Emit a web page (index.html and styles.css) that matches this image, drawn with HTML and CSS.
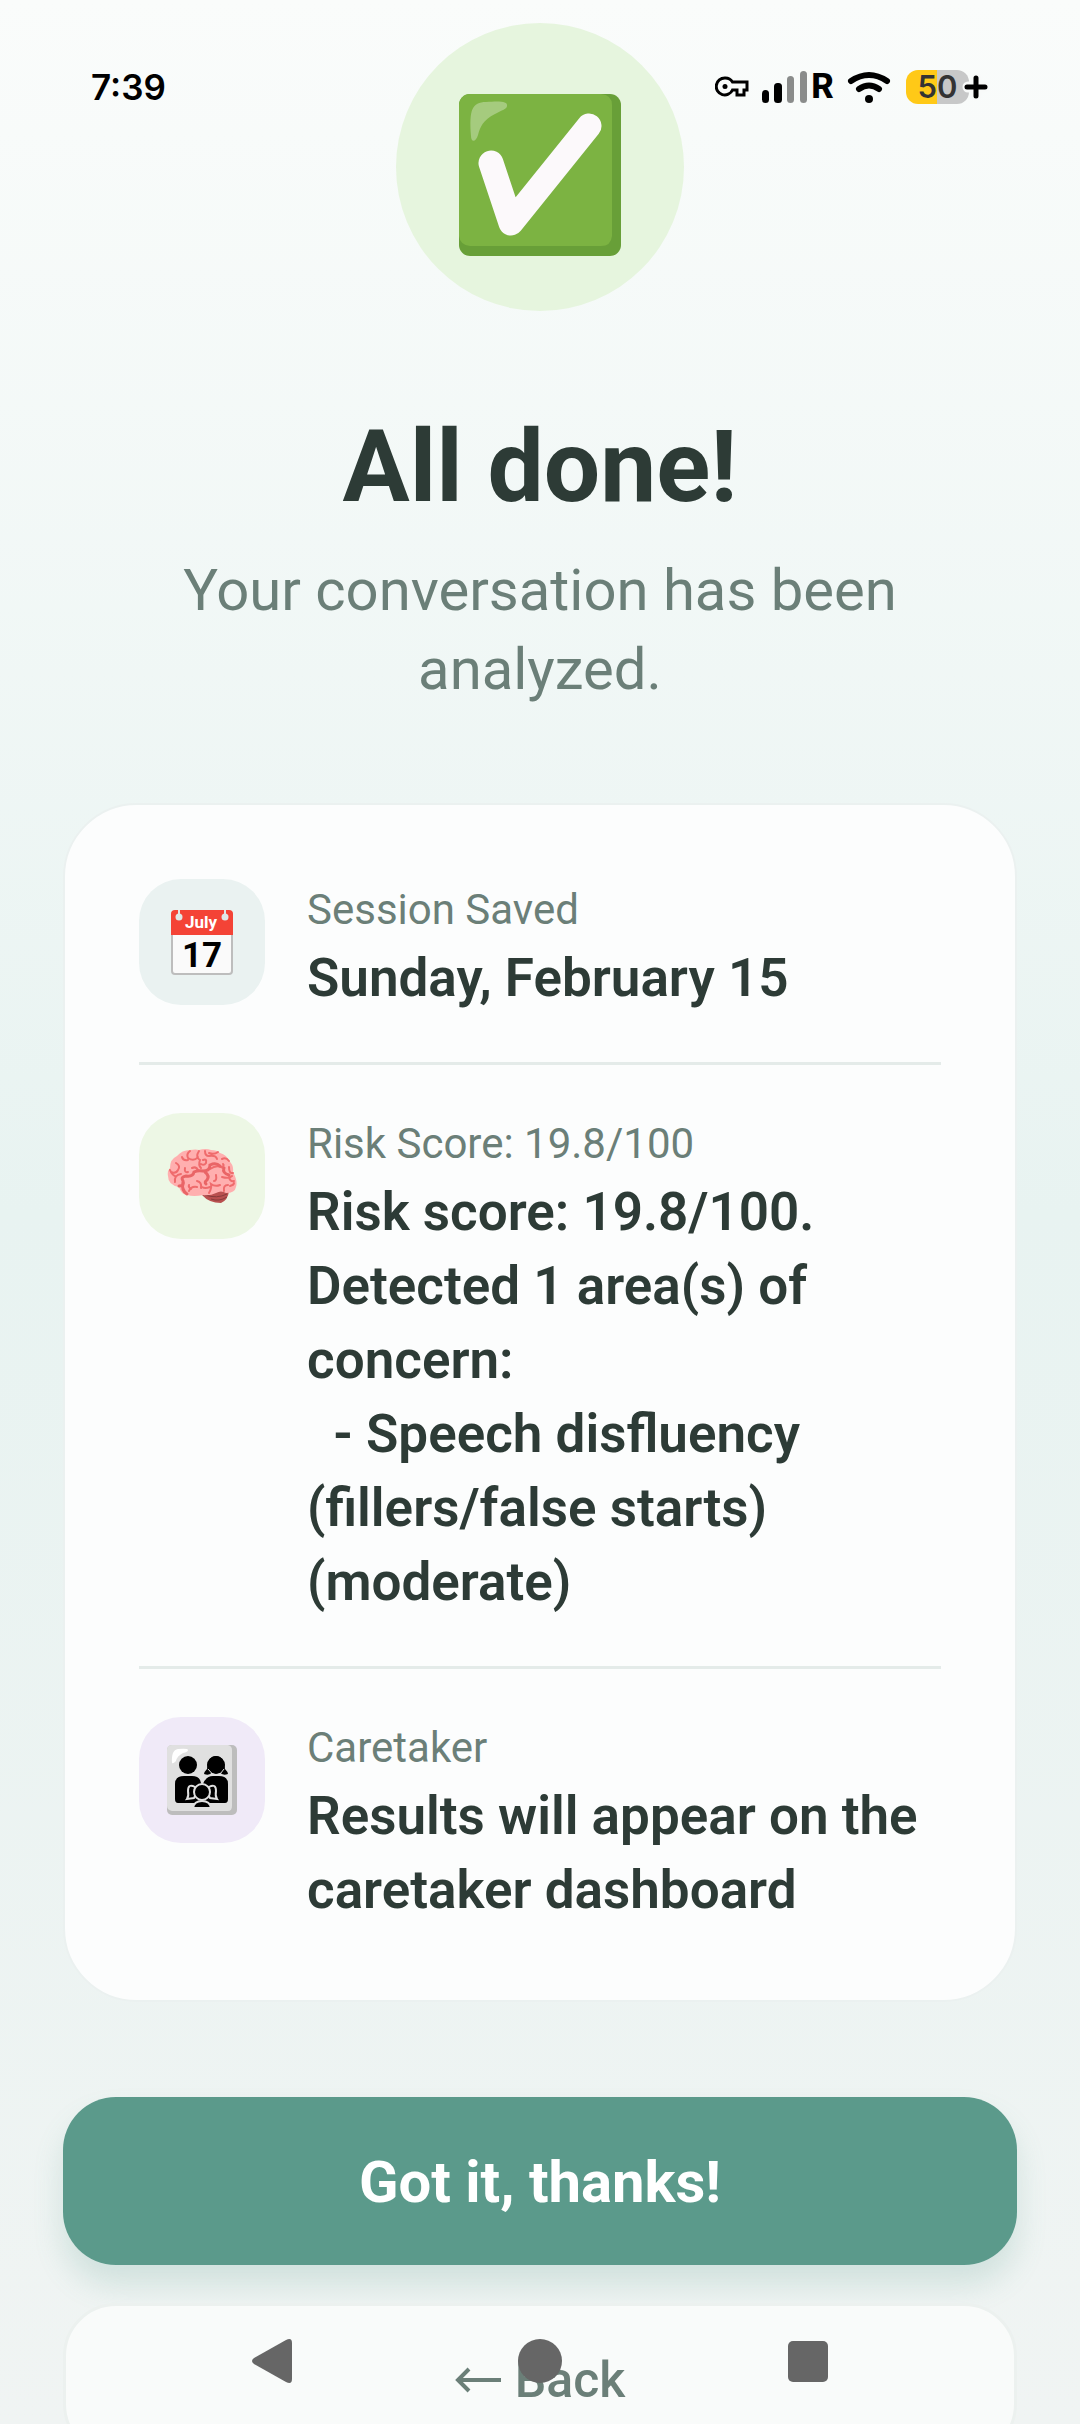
FILE: index.html
```
<!DOCTYPE html>
<html lang="en">
<head>
    <meta charset="UTF-8">
    <meta name="viewport" content="width=device-width, initial-scale=1.0">
    <title>All done!</title>
    <link rel="stylesheet" href="styles.css">
</head>
<body>
    <div class="screen">
        <div class="status-bar">
            <span class="time">7:39</span>
            <div class="status-icons">
                <svg class="key-icon" width="34" height="22" viewBox="0 0 34 22">
                    <path d="M10 2a8.500 8.500 0 1 0 7.500 12H22v5h7v-5h3V6H17.500A8.500 8.500 0 0 0 10 2z" fill="none" stroke="#000" stroke-width="3"/>
                    <circle cx="10" cy="10.500" r="2.500"/>
                </svg>
                <svg class="signal-icon" width="46" height="34" viewBox="0 0 46 34">
                    <rect x="0" y="20" width="7" height="13" rx="3.500"/>
                    <rect x="12" y="13" width="8" height="20" rx="3.500"/>
                    <rect x="25" y="6" width="7" height="27" rx="3.500" fill="#8a8c8b"/>
                    <rect x="38" y="1" width="7" height="32" rx="3.500" fill="#8a8c8b"/>
                </svg>
                <span class="roaming">R</span>
                <svg class="wifi-icon" width="44" height="34" viewBox="0 0 44 34" fill="none" stroke="#000" stroke-width="6" stroke-linecap="round">
                    <path d="M4 11Q22-1 40 11"/>
                    <path d="M12 19Q22 12 32 19"/>
                    <circle cx="22" cy="29" r="4" fill="#000" stroke="none"/>
                </svg>
                <div class="battery">
                    <span class="battery-level">50</span>
                    <svg class="plus-icon" width="28" height="28" viewBox="0 0 28 28" fill="none" stroke-linecap="round">
                        <path d="M14 6v16M6 14h16" stroke="#f8faf9" stroke-width="11"/>
                        <path d="M14 5v18M5 14h18" stroke="#000" stroke-width="5"/>
                    </svg>
                </div>
            </div>
        </div>

        <main class="content">
            <div class="hero">
                <svg width="162" height="162" viewBox="0 0 162 162">
                    <rect width="162" height="162" rx="11" fill="#689f38"/>
                    <path d="M0 11A11 11 0 0 1 11 0H142Q153 1 153 11V142Q152 152 142 152H11Q1 151 0 142z" fill="#7cb342"/>
                    <path d="M12 42C10 16 13 8 27 8C40 7 49 7 48 12C48 15 43 16 36 20C24 26 21 33 19 41C17 48 12 49 12 42z" fill="#a5cb7e"/>
                    <path d="M32 69L52 129L130 32" fill="none" stroke="#fcf9fb" stroke-width="25" stroke-linecap="round" stroke-linejoin="round"/>
                </svg>
            </div>
            <h1>All done!</h1>
            <p class="subtitle">Your conversation has been analyzed.</p>

            <section class="card">
                <div class="row">
                    <div class="icon icon-calendar">
                        <svg width="64" height="66" viewBox="0 0 64 66">
                            <rect x="2" y="3" width="60" height="62" rx="3" fill="#fafafa" stroke="#bdbdbd" stroke-width="2"/>
                            <path d="M1 26V5Q1 1 5 1H59Q63 1 63 5V26z" fill="#f44336"/>
                            <path d="M9 1v6M55 1v6" stroke="#e0e8e7" stroke-width="2"/>
                            <circle cx="9" cy="8" r="3.500" fill="#e0e8e7"/>
                            <circle cx="55" cy="8" r="3.500" fill="#e0e8e7"/>
                            <text class="calendar-month" x="31" y="19" text-anchor="middle">July</text>
                            <text class="calendar-day" x="32" y="58" text-anchor="middle">17</text>
                        </svg>
                    </div>
                    <div class="info">
                        <p class="label">Session Saved</p>
                        <p class="value">Sunday, February 15</p>
                    </div>
                </div>
                <div class="row">
                    <div class="icon icon-brain">
                        <svg width="70" height="56" viewBox="0 0 70 56">
                            <path d="M35 47Q42 55 54 55Q61 52 62 43L50 40z" fill="#b9504f"/>
                            <path d="M38 47Q50 51 60 46M44 51Q52 54 60 49" fill="none" stroke="#873b3b" stroke-width="1"/>
                            <path d="M12 39Q1 37 1 28Q0 23 3 20Q3 11 10 8Q15 2 23 2Q29 1 32 2Q39 0 44 2Q50 2 53 5Q60 7 62 13Q67 17 66 24Q71 33 69 39Q68 45 59 45Q54 42 49 45Q43 48 36 47Q27 49 20 47Q14 46 12 39z" fill="#ffafaf"/>
                            <g fill="none" stroke="#ef6b6c" stroke-width="2" stroke-linecap="round">
                                <path d="M23 3Q19 6 21 10Q27 14 31 9M15 9Q16 13 21 12M9 15Q14 18 11 22Q9 26 4 24M3 22Q5 27 8 28M8 34Q7 27 14 26M18 20Q17 25 21 24M25 20Q29 18 31 22M32 3Q28 9 33 12Q31 17 34 20M38 3Q38 8 42 8Q49 7 50 11M42 5Q47 7 51 4M36 12Q40 10 39 15Q37 18 34 16M55 11Q59 9 62 13M56 16Q58 18 54 19M43 21Q50 16 56 20M62 19Q62 26 66 25M55 29Q62 31 65 28M62 29Q63 34 67 33M22 43Q24 38 30 39M24 41Q21 39 22 37M34 40Q35 34 30 33M35 39Q38 41 43 39M42 45Q45 40 44 36Q48 39 53 37M57 43Q56 37 61 37M63 38Q67 37 67 35M49 27Q50 33 47 33"/>
                                <path d="M12 38Q18 38 16 33Q13 29 19 28Q26 29 27 24Q31 22 36 23Q43 23 43 17Q49 14 53 18M16 34Q14 42 20 46M38 24Q43 28 40 32Q37 34 39 36M57 20Q55 25 62 27" stroke="#e96566" stroke-width="3"/>
                            </g>
                        </svg>
                    </div>
                    <div class="info">
                        <p class="label">Risk Score: 19.8/100</p>
                        <p class="value">Risk score: 19.8/100. Detected 1 area(s) of concern:
  - Speech disfluency (fillers/false starts) (moderate)</p>
                    </div>
                </div>
                <div class="row">
                    <div class="icon icon-family">
                        <svg width="70" height="70" viewBox="0 0 70 70">
                            <rect width="70" height="70" rx="5" fill="#bdbdbd"/>
                            <path d="M0 5Q0 0 5 0H61Q65 1 65 5V61Q65 66 61 66H5Q0 65 0 61z" fill="#e0e0e0"/>
                            <path d="M5 18Q4 5 11 4Q21 3 21 5Q21 7 16 8Q10 11 9 16Q6 19 5 18z" fill="#fff"/>
                            <circle cx="21" cy="20" r="9"/>
                            <path d="M40 24Q37 27 37 29Q43 31 45 27M53 27Q55 31 61 29Q61 27 58 24"/>
                            <path d="M40 27Q40 11 49 11Q58 11 58 27L54 25H44z"/>
                            <circle cx="49" cy="20" r="9"/>
                            <path d="M8 39Q8 31 17 31H25Q33 31 34 38L36 39Q39 31 46 31H52Q61 31 61 39V54Q61 58 58 58H11Q8 58 8 54z"/>
                            <path d="M41 24Q45 30 49 30Q54 30 57 24" fill="none" stroke="#e0e0e0" stroke-width="1"/>
                            <g stroke="#e0e0e0" stroke-width="2">
                                <path d="M28 42Q21 38 21 46Q22 51 20 54L27 53Q30 49 28 42zM42 42Q49 38 49 46Q48 51 50 54L43 53Q40 49 42 42z"/>
                                <circle cx="35" cy="47" r="8"/>
                                <path d="M26 63Q27 56 35 56Q43 56 44 63z"/>
                            </g>
                        </svg>
                    </div>
                    <div class="info">
                        <p class="label">Caretaker</p>
                        <p class="value">Results will appear on the caretaker dashboard</p>
                    </div>
                </div>
            </section>

            <button type="button" class="btn btn-primary">Got it, thanks!</button>
            <button type="button" class="btn btn-back">
                <svg width="46" height="26" viewBox="0 0 46 26" fill="none" stroke="#6b7f78" stroke-width="4">
                    <path d="M46 13H3M14 2L3 13l11 11"/>
                </svg>
                Back
            </button>
        </main>

        <nav class="nav-bar">
            <button type="button" aria-label="Back">
                <svg width="44" height="46" viewBox="0 0 44 46" fill="#666">
                    <path d="M36 2Q42-1 42 5V41Q42 47 36 44L4 26Q0 23 4 20z"/>
                </svg>
            </button>
            <button type="button" aria-label="Home">
                <svg width="44" height="46" viewBox="0 0 44 46" fill="#666">
                    <circle cx="22" cy="23" r="22"/>
                </svg>
            </button>
            <button type="button" aria-label="Recent apps">
                <svg width="44" height="46" viewBox="0 0 44 46" fill="#666">
                    <rect x="2" y="3" width="40" height="41" rx="5"/>
                </svg>
            </button>
        </nav>
    </div>
</body>
</html>
```

FILE: styles.css
```
* {
    box-sizing: border-box;
}

body {
    font-family: Roboto, sans-serif;
    margin: 0;
    color: #2d3b36;
}

h1,
p {
    margin: 0;
}

button {
    font-family: inherit;
    border: none;
    cursor: pointer;
}

svg {
    display: block;
    flex-shrink: 0;
}

.screen {
    position: relative;
    height: 100vh;
    overflow: hidden;
    background: linear-gradient(#fafcfb, #e8f3f1 50%, #f0f4f3);
}

/* Status bar */
.status-bar {
    position: absolute;
    top: 0;
    left: 0;
    right: 0;
    display: flex;
    justify-content: space-between;
    align-items: center;
    padding: 68px 90px 0 91px;
    color: #000;
}

.time {
    font-family: Inter, sans-serif;
    font-size: 35px;
    font-weight: 600;
    line-height: 38px;
}

.status-icons {
    display: flex;
    align-items: center;
}

.signal-icon {
    margin-left: 13px;
}

.roaming {
    margin-left: 3px;
    font-size: 35px;
    font-weight: 800;
    line-height: 36px;
}

.wifi-icon {
    margin-left: 13px;
}

.battery {
    display: flex;
    align-items: center;
    margin-left: 15px;
}

.battery-level {
    width: 63px;
    border-radius: 12px;
    background: linear-gradient(90deg, #ffc917 49%, #c7c8c8 49%);
    color: #333;
    font-family: Inter, sans-serif;
    font-size: 31px;
    font-weight: 600;
    line-height: 34px;
    text-align: center;
}

.plus-icon {
    margin-left: -7px;
}

/* Page content */
.content {
    display: flex;
    flex-direction: column;
    padding: 23px 63px 0;
}

.hero {
    display: flex;
    justify-content: center;
    align-items: center;
    align-self: center;
    width: 288px;
    height: 288px;
    padding-top: 16px;
    border-radius: 50%;
    background-color: #e6f5de;
}

h1 {
    margin-top: 96px;
    font-size: 100px;
    font-weight: 700;
    line-height: 120px;
    text-align: center;
}

.subtitle {
    margin-top: 24px;
    padding: 0 63px;
    color: #6b7f78;
    font-size: 58px;
    line-height: 79px;
    text-align: center;
}

.card {
    margin-top: 94px;
    padding: 74px 74px 73px;
    border: 2px solid #ebf1f0;
    border-radius: 74px;
    background-color: #fcfdfd;
}

.row {
    display: flex;
    align-items: flex-start;
    gap: 42px;
}

.row + .row {
    margin-top: 47px;
    padding-top: 48px;
    border-top: 3px solid #e4ebe9;
}

.icon {
    display: flex;
    justify-content: center;
    align-items: center;
    flex-shrink: 0;
    width: 126px;
    height: 126px;
    border-radius: 42px;
}

.icon-calendar {
    background-color: #eaf2f1;
}

.icon-brain {
    background-color: #edf7e5;
}

.icon-family {
    background-color: #f0eaf8;
}

.calendar-month {
    fill: #fff;
    font-size: 17px;
    font-weight: 700;
}

.calendar-day {
    font-size: 35px;
    font-weight: 700;
}

.label {
    margin-bottom: 1px;
    color: #6b7f78;
    font-size: 42px;
    line-height: 61px;
}

.value {
    font-size: 53px;
    font-weight: 600;
    line-height: 74px;
    white-space: pre-wrap;
}

/* Buttons */
.btn {
    display: flex;
    justify-content: center;
    align-items: center;
    border-radius: 53px;
}

.btn-primary {
    margin-top: 95px;
    padding: 50px 48px 48px;
    background-color: #5b9a8b;
    box-shadow: 0 20px 30px rgba(91, 154, 139, 0.2);
    color: #fff;
    font-size: 58px;
    font-weight: 700;
    line-height: 70px;
}

.btn-back {
    gap: 14px;
    margin-top: 38px;
    padding: 43px;
    border: 3px solid #ecf1ef;
    background-color: #f9fbfa;
    color: #6b7f78;
    font-size: 50px;
    font-weight: 500;
    line-height: 62px;
}

/* System navigation */
.nav-bar {
    position: absolute;
    bottom: 0;
    left: 0;
    right: 0;
    display: flex;
    justify-content: center;
    gap: 224px;
    padding: 0 0 40px;
}

.nav-bar button {
    padding: 0;
    background: none;
}
```
